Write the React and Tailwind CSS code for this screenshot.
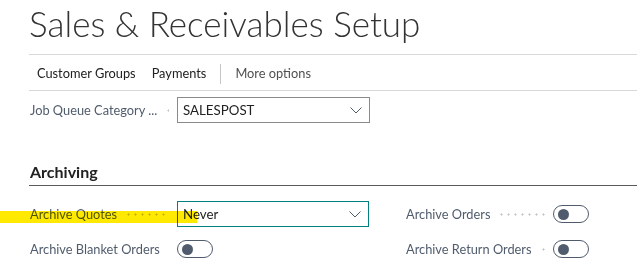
import { useState } from 'react';

function Leader() {
  // dotted leader between a caption and its control
  return (
    <div className="flex-1 h-[3px] mx-[8px] bg-[radial-gradient(circle,#c4c4c4_0.9px,transparent_1.2px)] bg-[length:7px_3px] bg-repeat-x" />
  );
}

function Caption({ children }) {
  return (
    <div className="w-[147px] flex items-center shrink-0">
      <span className="pt-[2px] text-[#505c6d] whitespace-nowrap">{children}</span>
      <Leader />
    </div>
  );
}

function Chevron() {
  return (
    <svg width="12" height="7" viewBox="0 0 12 7" className="shrink-0">
      <path d="M0.5 0.5 L6 6 L11.5 0.5" fill="none" stroke="#505c6d" strokeWidth="1" />
    </svg>
  );
}

function Select({ value, focused }) {
  return (
    <div
      className={
        'w-[193px] h-[26px] flex items-center justify-between pl-[5px] pr-[7px] border ' +
        (focused ? 'border-[#00807f]' : 'border-[#8a8a8a]')
      }
    >
      <span className="pt-[2px] text-[13.3px] text-[#212121]">{value}</span>
      <Chevron />
    </div>
  );
}

function Toggle({ on }) {
  return (
    <div className="w-[36px] h-[18px] shrink-0 rounded-full border-[1.5px] border-[#505c6d] flex items-center pl-[3.5px]">
      <div className={'w-[11px] h-[11px] rounded-full bg-[#505c6d] ' + (on ? 'ml-auto mr-[3px]' : '')} />
    </div>
  );
}

function Field({ label, children }) {
  return (
    <div className="flex items-center h-[26px]">
      <Caption>{label}</Caption>
      {children}
    </div>
  );
}

export default function App() {
  const [orders] = useState(false);

  return (
    <div className="relative w-[637px] h-[274px] overflow-hidden bg-white text-[12.8px] font-['Lato',sans-serif]">
      <h1 className="h-[54px] pl-[29px] pt-[2px] text-[35px] leading-[42px] font-light text-[#333333] whitespace-nowrap">
        Sales &amp; Receivables Setup
      </h1>

      {/* Action bar */}
      <div className="ml-[29px] h-[37px] pt-[2px] border-y border-[#d9d9d9] flex items-center pl-[8px] text-[#212121]">
        <span>Customer Groups</span>
        <span className="ml-[16px]">Payments</span>
        <div className="mx-[14px] w-px h-[20px] bg-[#c6c6c6]" />
        <span className="text-[#505050]">More options</span>
      </div>

      <div className="pl-[30px] mt-[6px]">
        <Field label="Job Queue Category ...">
          <Select value="SALESPOST" />
        </Field>
      </div>

      {/* Archiving */}
      <div className="ml-[29px] mt-[36px] h-[27px] border-b border-[#5a5a5a] flex items-center pl-[1px]">
        <h2 className="text-[16px] font-bold text-[#212121]">Archiving</h2>
      </div>

      <div className="pl-[30px] mt-[15px] grid grid-cols-[339px_1fr] gap-x-[37px] gap-y-[9px]">
        <Field label="Archive Quotes">
          <Select value="Never" focused />
        </Field>
        <Field label="Archive Orders">
          <Toggle on={orders} />
        </Field>
        <Field label="Archive Blanket Orders">
          <Toggle />
        </Field>
        <Field label="Archive Return Orders">
          <Toggle />
        </Field>
      </div>

      {/* highlighter mark over the first row */}
      <div className="absolute left-0 top-[211px] w-[197px] h-[12px] bg-[#ffe900] mix-blend-multiply" />
    </div>
  );
}
